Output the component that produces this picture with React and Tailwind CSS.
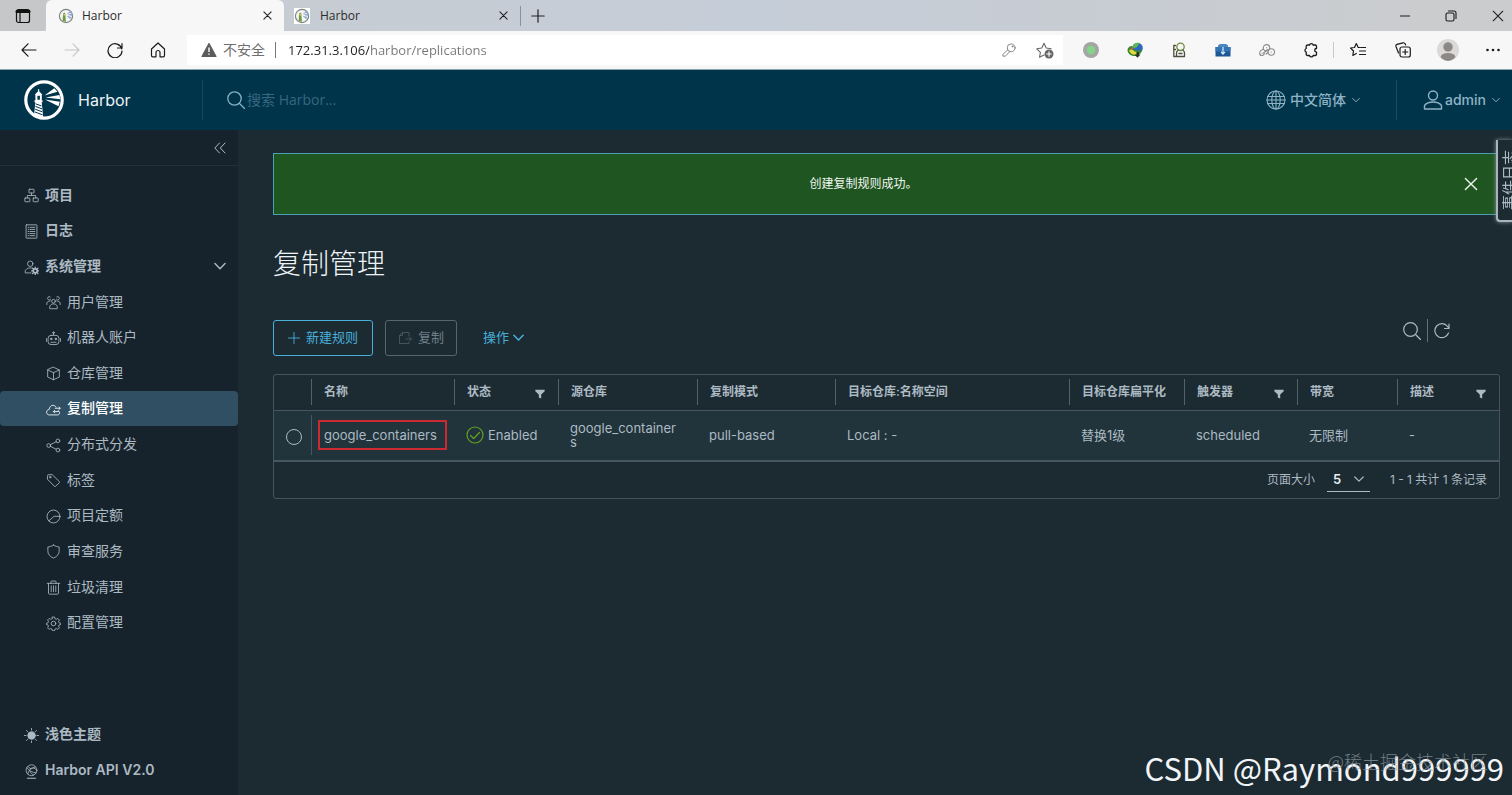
import React from "react";

const UI = "font-['Inter','Noto_Sans_CJK_SC',sans-serif]";
const SYS = "font-['Open_Sans','Noto_Sans_CJK_SC',sans-serif]";

function Ico({ className = "size-4", w = 2, box = 36, children }) {
  return (
    <svg
      aria-hidden="true"
      viewBox={`0 0 ${box} ${box}`}
      className={`shrink-0 ${className}`}
      fill="none"
      stroke="currentColor"
      strokeWidth={w}
      strokeLinecap="round"
      strokeLinejoin="round"
    >
      {children}
    </svg>
  );
}

const CloseX = ({ className = "size-2.5", w = 1.2 }) => (
  <Ico box={10} w={w} className={className}>
    <path d="M1 1l8 8M9 1l-8 8" />
  </Ico>
);

const Chevron = ({ className = "size-2", w = 1.2 }) => (
  <Ico box={10} w={w} className={className}>
    <path d="M.8 3l4.200 4.200L9.200 3" />
  </Ico>
);

const Funnel = () => (
  <svg aria-hidden="true" viewBox="0 0 10 10" className="size-2.5 shrink-0" fill="currentColor">
    <path d="M.3.8h9.400v1.400L6.200 5.600v4L3.800 8.400V5.600L.3 2.200z" />
  </svg>
);

const Favicon = () => (
  <svg aria-hidden="true" viewBox="0 0 16 16" className="size-4 shrink-0">
    <circle cx="8" cy="8" r="6.600" fill="#f4f5f4" stroke="#7d8583" strokeWidth="1.200" />
    <path d="M8.500 6l4.500-3.500 1.300 2zM9 6.800l5.500-1.300v2.500zM8.500 7.800l5 1.200-1.500 2z" fill="#8fa6d4" />
    <path d="M5 5.800L6.200 4.500l1.200 1.300v2l.5 6-3.200-.8z" fill="#6c9a3f" />
    <path d="M5.500 6h1.400v1.500H5.500z" fill="#e9d36a" />
  </svg>
);

const Logo = () => (
  <svg aria-hidden="true" viewBox="0 0 40 40" className="size-10 shrink-0">
    <circle cx="20" cy="20" r="18.200" fill="none" stroke="#fff" strokeWidth="3.200" />
    <path d="M10 36.500l1.300-14.500h6.400l1.600 16.300c-3.500 0-6.500-.3-9.300-1.800z" fill="#fff" />
    <path d="M10.500 20.300h8v1.900h-8zM11.400 14.500h6.400v6h-6.400zM10.700 14.800l3.900-4 3.900 4z" fill="#fff" />
    <path d="M14 9.300h1.200v2.200H14z" fill="#fff" />
    <path d="M13.400 15.800h2.500v3.900h-2.500z" fill="#00344b" />
    <path d="M11.600 23.800l6 2.200M11.400 26.400l6.600 2.500M11.200 29.200l7 2.600M11 32l7.500 2.800" stroke="#00344b" strokeWidth="1" />
    <path d="M20.500 15.600L30.300 8.200l3.200 3.600zM21.500 17.400l14-2.400.8 4.300zM21 19.500l14.800 2.300-1.300 4.400z" fill="#fff" />
  </svg>
);

const icons = {
  project: (
    <>
      <rect x="12" y="3" width="12" height="9" rx="1" />
      <rect x="2" y="24" width="12" height="9" rx="1" />
      <rect x="22" y="24" width="12" height="9" rx="1" />
      <path d="M18 12v6M8 24v-6h20v6" />
    </>
  ),
  log: (
    <>
      <rect x="5" y="2" width="26" height="32" rx="1" />
      <path d="M10 8h2M15 8h11M10 13h2M15 13h11M10 18h2M15 18h11M10 23h2M15 23h11M10 28h2M15 28h11" />
    </>
  ),
  admin: (
    <>
      <circle cx="15" cy="9" r="6.500" />
      <path d="M17 31H3v-6c3-4 7-6 12-6 1.500 0 3 .2 4.500.6" />
      <circle cx="27" cy="26" r="4.800" strokeWidth="4" />
      <path d="M27 17v3M27 32v3M18 26h3M33 26h3M20.600 19.600l2.200 2.200M31.200 30.200l2.200 2.200M33.400 19.600l-2.200 2.200M22.800 30.200l-2.200 2.200" strokeWidth="3" />
    </>
  ),
  users: (
    <>
      <circle cx="18" cy="15" r="4.500" />
      <path d="M9 32v-5c2-4 5-5.500 9-5.500s7 1.500 9 5.500v5z" />
      <path d="M11 10.500a4 4 0 1 1-1-6M25 10.500a4 4 0 1 0 1-6M2 23v-4c1.500-3 4-4.500 8-4.500M34 23v-4c-1.500-3-4-4.500-8-4.500" />
    </>
  ),
  robot: (
    <>
      <path d="M18 10V4" />
      <circle cx="18" cy="4" r="2" />
      <rect x="5" y="10.500" width="26" height="22" rx="7" />
      <circle cx="12.500" cy="19" r="1.800" fill="currentColor" />
      <circle cx="23.500" cy="19" r="1.800" fill="currentColor" />
      <path d="M12 27h12M1 18v7M35 18v7" />
    </>
  ),
  cube: (
    <>
      <path d="M18 3l14 6.500v17L18 33 4 26.500v-17z" />
      <path d="M4 9.500L18 16l14-6.500M18 16v17" />
    </>
  ),
  cloud: (
    <>
      <path d="M29 21c2.500.5 3.500 2.500 3.500 5 0 3.500-2 5-5 5H8c-4 0-6.500-2.500-6.500-6.500 0-3.800 2.600-6.300 6-6.500C8.500 12 12 8 16.500 8c3.500 0 6 1.600 7.600 4.200" />
      <path d="M18 23h12M21 20l-3 3 3 3M22 15h12M31 12l3 3-3 3" />
    </>
  ),
  share: (
    <>
      <circle cx="6.500" cy="18" r="4.500" />
      <circle cx="28.500" cy="7" r="4.500" />
      <circle cx="28.500" cy="29" r="4.500" />
      <path d="M10.500 16l14-7M10.500 20l14 7" />
    </>
  ),
  tag: (
    <>
      <path d="M4 5.500C4 4.500 4.500 4 5.500 4H15l17 16.500c1 1 1 1.800 0 2.800L23 32c-1 1-1.800 1-2.800 0L4 15.500z" />
      <circle cx="10" cy="10" r="1.800" />
    </>
  ),
  quota: (
    <>
      <circle cx="18" cy="18" r="15.500" />
      <path d="M7 28.500L19.500 17.500H33" />
    </>
  ),
  shield: <path d="M18 2.500c4.500 3 9 4.400 13.500 4.500v10.500c0 7-5 12.500-13.500 16.500C9.500 30 4.500 24.500 4.500 17.500V7C9 6.900 13.500 5.500 18 2.500z" />,
  trash: (
    <>
      <path d="M3 8h30M6 8v24c0 1 1 2 2 2h20c1 0 2-1 2-2V8M12 8V4c0-1 .5-1.500 1.500-1.500h9c1 0 1.500.5 1.500 1.500v4" />
      <path d="M12.500 14v14M18 14v14M23.500 14v14" />
    </>
  ),
  gear: (
    <>
      <circle cx="18" cy="18" r="5.500" />
      <path d="M15.500 2.500h5l1.200 4.200 3 1.200 3.800-2 3.600 3.600-2 3.800 1.200 3 4.200 1.200v3l-4.200 1.200-1.200 3 2 3.800-3.600 3.600-3.800-2-3 1.200-1.200 4.200h-5l-1.200-4.200-3-1.200-3.800 2-3.600-3.600 2-3.800-1.200-3L.8 20.500v-3L4.700 16.300l1.200-3-2-3.800 3.600-3.600 3.800 2 3-1.200z" />
    </>
  ),
  sun: (
    <>
      <circle cx="18" cy="18" r="9" fill="currentColor" />
      <path d="M18 1v4M18 31v4M1 18h4M31 18h4M6 6l3 3M27 27l3 3M30 6l-3 3M9 27l-3 3" />
    </>
  ),
  api: (
    <>
      <circle cx="18" cy="15" r="13" />
      <path d="M7 9c6 8 14 12 22 12M9 24c1-8 8-14 18-17M10 6l5 5M15 11c6-3 10-1 14 2M14 17c2 5 5 8 9 9" />
      <path d="M8 34h20" strokeWidth="2.500" />
    </>
  ),
};

const subItems = [
  ["用户管理", "users"],
  ["机器人账户", "robot"],
  ["仓库管理", "cube"],
  ["复制管理", "cloud"],
  ["分布式分发", "share"],
  ["标签", "tag"],
  ["项目定额", "quota"],
  ["审查服务", "shield"],
  ["垃圾清理", "trash"],
  ["配置管理", "gear"],
];

function TopItem({ label, icon }) {
  return (
    <a href="#" className="flex items-center gap-1.5 pl-6 text-sm font-semibold">
      <Ico className="size-[15px] mt-0.5">{icons[icon]}</Ico>
      {label}
    </a>
  );
}

function Sidebar() {
  return (
    <aside className="flex w-[238px] shrink-0 flex-col bg-[#17232c] text-[#acbac3]">
      <div className="flex h-9 items-center justify-end border-b border-[#22323b] pr-3">
        <button type="button" aria-label="折叠菜单">
          <Ico box={12} w={1} className="size-3">
            <path d="M5.500 1L.8 6l4.700 5M11 1L6.300 6l4.700 5" />
          </Ico>
        </button>
      </div>
      <nav className="mt-[11px] grid h-[463px] shrink-0 auto-rows-fr">
        <TopItem label="项目" icon="project" />
        <TopItem label="日志" icon="log" />
        <button type="button" className="flex items-center gap-1.5 pl-6 pr-3 text-left text-sm font-semibold">
          <Ico className="size-[15px] mt-0.5">{icons.admin}</Ico>
          <span className="flex-1">系统管理</span>
          <Chevron className="size-3" />
        </button>
        {subItems.map(([label, icon]) => (
          <a
            key={label}
            href="#"
            className={`flex items-center gap-1.5 pl-[46px] text-sm ${
              icon === "cloud" ? "rounded bg-[#304f62] font-medium text-white" : ""
            }`}
          >
            <Ico className="size-[15px] mt-0.5">{icons[icon]}</Ico>
            {label}
          </a>
        ))}
      </nav>
      <div className="mt-auto grid auto-rows-[36px] pb-[7px]">
        <TopItem label="浅色主题" icon="sun" />
        <TopItem label="Harbor API V2.0" icon="api" />
      </div>
    </aside>
  );
}

function BrowserTab({ active }) {
  return (
    <div
      className={`flex h-full items-center ${
        active ? "w-[238px] rounded-t-md bg-[#f7f7f7] pl-3 pr-3" : "w-[236px] rounded-bl-md pl-2.5 pr-3"
      }`}
    >
      <span className={active ? "" : "bg-white"}>
        <Favicon />
      </span>
      <span className={`flex-1 text-xs text-[#2b2b2b] ${active ? "pl-2" : "pl-2.5"}`}>Harbor</span>
      <button type="button" aria-label="关闭标签页" className="text-[#222]">
        <CloseX className="size-[9px]" />
      </button>
    </div>
  );
}

function ToolBtn({ label, className = "w-11", children }) {
  return (
    <button type="button" aria-label={label} className={`flex items-center justify-center ${className}`}>
      {children}
    </button>
  );
}

function BrowserChrome() {
  return (
    <div className={`shrink-0 ${SYS}`}>
      <div className="flex h-[31px] items-center bg-linear-to-r from-[#c8ccd0] via-[#c5cdd8] to-[#cbcccd]">
        <button type="button" aria-label="标签页操作" className="flex h-full w-[46px] items-center justify-center rounded-br-md bg-[#c6c7c8] text-[#111]">
          <Ico box={16} w={1.200} className="size-4">
            <rect x="1.500" y="1.500" width="13" height="13" rx="2" />
            <path d="M2 3.500h12" strokeWidth="3" />
            <path d="M5 5v9.500" />
          </Ico>
        </button>
        <BrowserTab active />
        <BrowserTab />
        <span className="h-5 w-px bg-[#8c9197]" />
        <button type="button" aria-label="新建标签页" className="ml-2.5 text-[#222]">
          <Ico box={14} w={1.200} className="size-3.5">
            <path d="M7 .8v12.400M.8 7h12.400" />
          </Ico>
        </button>
        <div className="ml-auto flex items-center gap-[35px] pr-2 text-[#1b1b1b]">
          <button type="button" aria-label="最小化">
            <Ico box={10} w={1.100} className="size-2.5">
              <path d="M.3 5h9.400" />
            </Ico>
          </button>
          <button type="button" aria-label="还原">
            <Ico box={12} w={1.100} className="size-3">
              <rect x="1" y="3" width="8" height="8" rx="1.500" />
              <path d="M3.500 1h5.500a2 2 0 0 1 2 2v5.500" />
            </Ico>
          </button>
          <button type="button" aria-label="关闭">
            <CloseX w={0.900} className="size-3" />
          </button>
        </div>
      </div>
      <div className="flex h-[39px] items-center border-b border-[#8fa3ab] bg-[#f7f7f7] text-[#1b1b1b]">
        <div className="flex pl-[7px] pr-2">
          <ToolBtn label="后退" className="w-[43px]">
            <Ico box={16} w={1.200}>
              <path d="M15 8H1M7 1.800L1 8l6 6.200" />
            </Ico>
          </ToolBtn>
          <ToolBtn label="前进" className="w-[43px] text-[#c6c6c6]">
            <Ico box={16} w={1.100}>
              <path d="M1 8h14M9 1.800L15 8l-6 6.200" />
            </Ico>
          </ToolBtn>
          <ToolBtn label="刷新" className="w-[43px]">
            <Ico box={16} w={1.200}>
              <path d="M14.800 7A7 7 0 1 0 15 9M15 1.500V6h-4.500" />
            </Ico>
          </ToolBtn>
          <ToolBtn label="主页" className="w-[43px]">
            <Ico box={16} w={1.200}>
              <path d="M1.500 7L8 1l6.500 6v6.500c0 .8-.5 1.300-1.200 1.300H10V10.500a2 2 0 0 0-4 0v4.300H2.700c-.7 0-1.200-.5-1.200-1.300z" />
            </Ico>
          </ToolBtn>
        </div>
        <div className="flex h-[30px] flex-1 items-center bg-white pl-3.5">
          <svg aria-hidden="true" viewBox="0 0 16 16" className="size-4 shrink-0">
            <path d="M8 1.200L15.200 14.500H.8z" fill="#5c5c5c" stroke="#5c5c5c" strokeLinejoin="round" />
            <path d="M8 5.500v4.500M8 11.500v1.300" stroke="#fff" strokeWidth="1.400" />
          </svg>
          <span className="pl-1.5 text-sm text-[#6e6e6e]">不安全</span>
          <span className="ml-2.5 h-4 w-px bg-[#777]" />
          <input
            aria-label="地址"
            defaultValue="172.31.3.106/harbor/replications"
            className="ml-3 h-6 min-w-0 flex-1 bg-[linear-gradient(90deg,#1f1f1f_81px,#767676_81px)] bg-clip-text text-[13px] text-transparent outline-none"
          />
          <ToolBtn label="密码" className="w-9 text-[#777]">
            <Ico box={16} w={1} className="size-3.5">
              <circle cx="10.500" cy="5.500" r="4.500" />
              <circle cx="12" cy="4" r=".6" />
              <path d="M6.500 7.800L1 13v2h3l4.800-5.200" />
            </Ico>
          </ToolBtn>
          <ToolBtn label="收藏此页" className="w-9 text-[#666]">
            <Ico box={18} w={1.100} className="size-[18px]">
              <path d="M8 14l-4.500 2.300.9-5L.8 7.800l5-.8L8 2.300 10.200 7l5 .8" />
              <circle cx="13" cy="13" r="4.500" fill="#666" stroke="none" />
              <path d="M13 10.800v4.400M10.800 13h4.400" stroke="#fff" />
            </Ico>
          </ToolBtn>
        </div>
        <div className="flex items-center pl-1.5">
          <ToolBtn label="扩展 1">
            <svg viewBox="0 0 16 16" className="size-4">
              <circle cx="8" cy="8" r="8" fill="#a3a6a3" />
              <circle cx="8" cy="8" r="4.200" fill="#84d48a" />
            </svg>
          </ToolBtn>
          <ToolBtn label="扩展 2">
            <svg viewBox="0 0 16 16" className="size-4">
              <circle cx="10.500" cy="6" r="5.300" fill="#2c68c0" />
              <path d="M6 3.500C7.500 1 10.500.3 12.500 1L10 5 6.500 6.500z" fill="#62b845" />
              <path d="M.5 8c0-2 2-4 4.500-4l1.500 3.500 5 1.500 3.500-1.500c0 3-3 6-6.500 6.500C4 14.500.5 11.500.5 8z" fill="#358a2f" />
              <path d="M2 8.500c1.500-1.500 3-1.500 4.500 0s3.500 2 6 1l-3 3c-3 .8-6-.5-7.500-4z" fill="#e8d640" />
              <path d="M2.500 6.500l3-1.500.5 2.500z" fill="#d8532c" />
              <path d="M7.500 12.500h2V10h2.500v2.500h1.500l-3 3.200z" fill="#26331f" />
            </svg>
          </ToolBtn>
          <ToolBtn label="扩展 3" className="w-11 text-[#4b4f3d]">
            <Ico box={16} w={1.300}>
              <circle cx="9.500" cy="4.800" r="3.700" stroke="#6c8a3a" />
              <path d="M4.500 3.500H2.800v4H4.500M2.800 7.500v7h10.700V11c0-1.500-.5-2.200-1.500-2.800M7 8.200c-1 .6-1.500 1.500-1.500 3v3M8 11.500h3" />
            </Ico>
          </ToolBtn>
          <ToolBtn label="扩展 4">
            <svg viewBox="0 0 16 16" className="size-4">
              <path d="M3 5.500V3.500L5 2h6l2 1.500v2z" fill="#4a86bf" />
              <path d="M.5 5h15v9.500H.5z" fill="#1f5796" />
              <path d="M.5 5h15v4.500H.5z" fill="#3474b4" />
              <path d="M8 5v6.500M6 9.800L8 12l2-2.200" stroke="#d7ecff" strokeWidth="1.200" fill="none" />
            </svg>
          </ToolBtn>
          <ToolBtn label="扩展 5" className="w-11 text-[#8a8a8a]">
            <Ico box={16} w={1.100}>
              <circle cx="7.500" cy="5.800" r="3.200" />
              <circle cx="12.300" cy="10" r="3.200" />
              <path d="M4.500 7C2 8 .7 9.500.7 11.200c0 1.300 1 2.300 2.300 2.300s2.200-1 2.200-2.200M4.500 11l4-3.500M7.500 5.800h.1M12.300 10h.1M3 11.200h.1M7 12l2-1.500" />
            </Ico>
          </ToolBtn>
          <ToolBtn label="扩展">
            <Ico box={16} w={1.300}>
              <path d="M4.500 3h2a1.900 1.900 0 0 1 3.700 0h2c.8 0 1.300.5 1.300 1.300v2.200a1.800 1.800 0 0 0 0 3.600v2.100c0 .8-.5 1.300-1.300 1.300h-2a1.900 1.900 0 0 1-3.700 0h-2c-.8 0-1.300-.5-1.300-1.300v-2.100a1.900 1.900 0 0 1 0-3.600V4.300c0-.8.5-1.300 1.300-1.300z" />
            </Ico>
          </ToolBtn>
          <span className="h-4 w-px bg-[#c9c9c9]" />
        </div>
        <div className="flex items-center gap-[7px] pl-[5px]">
          <ToolBtn label="收藏夹" className="w-[38px]">
            <Ico box={16} w={1.200}>
              <path d="M10 5.500H8.200L6.300 1.500 4.500 5.500l-4 .5 3 3-.7 4.500 3.500-2M11 5.500h4.500M9.500 9h6M9.500 12.500h6" />
            </Ico>
          </ToolBtn>
          <ToolBtn label="集锦" className="w-[38px]">
            <Ico box={16} w={1.200}>
              <rect x="5" y="5" width="10.300" height="10" rx="2" />
              <path d="M10.200 7.500v5M7.700 10h5M3.500 11L1 4.500c-.3-1 .1-1.800 1-2.200l6-1.500c1-.2 1.800.2 2.200 1.200l.4 1" />
            </Ico>
          </ToolBtn>
          <ToolBtn label="用户配置" className="w-[38px]">
            <svg viewBox="0 0 22 22" className="size-[22px]">
              <circle cx="11" cy="11" r="11" fill="#dad9d8" />
              <circle cx="11" cy="8" r="4.700" fill="#8b8886" />
              <path d="M3.500 18c1-3 3.500-4 7.500-4s6.500 1 7.500 4A11 11 0 0 1 11 22a11 11 0 0 1-7.500-4z" fill="#8b8886" />
            </svg>
          </ToolBtn>
          <ToolBtn label="更多" className="w-[38px]">
            <svg viewBox="0 0 16 16" className="size-4" fill="#1b1b1b">
              <circle cx="2.500" cy="8" r="1.300" />
              <circle cx="8" cy="8" r="1.300" />
              <circle cx="13.500" cy="8" r="1.300" />
            </svg>
          </ToolBtn>
        </div>
      </div>
    </div>
  );
}

function Header() {
  return (
    <header className="flex h-[60px] shrink-0 items-center bg-[#00344b] text-[#8fb3c4]">
      <a href="#" className="flex w-[202px] items-center gap-3.5 pl-6 text-base text-[#eef3f5]">
        <Logo />
        Harbor
      </a>
      <span className="h-10 w-px bg-[#154659]" />
      <label className="flex flex-1 items-center pl-6">
        <Ico box={18} w={1.300} className="size-[18px] text-[#88b2c6]">
          <circle cx="7.500" cy="7.500" r="6.700" />
          <path d="M12.500 12.500l5 5" />
        </Ico>
        <input
          type="search"
          aria-label="搜索"
          placeholder="搜索 Harbor..."
          className={`ml-0.5 w-60 bg-transparent text-sm outline-none placeholder:text-[#376780] ${SYS}`}
        />
      </label>
      <button type="button" className="flex items-center pr-9 text-sm font-medium">
        <Ico box={20} w={1.100} className="size-5">
          <circle cx="10" cy="10" r="9" />
          <ellipse cx="10" cy="10" rx="4.200" ry="9" />
          <path d="M10 1v18M1.800 6.500h16.400M1.800 13.500h16.400M1 10h18" />
        </Ico>
        <span className="pl-1 pr-1.5">中文简体</span>
        <Chevron />
      </button>
      <span className="h-10 w-px bg-[#1c4c60]" />
      <button type="button" className="flex items-center pl-[26px] pr-3 text-sm font-medium">
        <Ico box={20} w={1.400} className="size-5">
          <circle cx="10" cy="5.500" r="4.500" />
          <path d="M1.500 19v-3.500C3.500 13 6.500 12 10 12s6.500 1 8.500 3.500V19z" />
        </Ico>
        <span className="pl-0.5 pr-1.5">admin</span>
        <Chevron />
      </button>
    </header>
  );
}

const columns = [
  ["名称", "w-[143px]", false],
  ["状态", "w-[104px]", true],
  ["源仓库", "w-[139px]", false],
  ["复制模式", "w-[138px]", false],
  ["目标仓库:名称空间", "w-[234px]", false],
  ["目标仓库扁平化", "w-[115px]", false],
  ["触发器", "w-[113px]", true],
  ["带宽", "w-[100px]", false],
  ["描述", "", true],
];

function RulesTable() {
  return (
    <div className="mt-[18px] overflow-hidden rounded-[3px] border border-[#43545d] text-[#acbac3]">
      <table className="w-full table-fixed border-collapse text-left">
        <thead>
          <tr className="h-[35px]">
            <th className="w-[37px] p-0" aria-label="选择" />
            {columns.map(([name, width, filter]) => (
              <th key={name} scope="col" className={`p-0 ${width}`}>
                <div className="flex h-[26px] items-center justify-between border-l border-[#51626b] pl-3 pr-[13px] text-xs font-semibold whitespace-nowrap">
                  {name}
                  {filter && (
                    <button type="button" aria-label={`筛选${name}`} className="pt-1">
                      <Funnel />
                    </button>
                  )}
                </div>
              </th>
            ))}
          </tr>
        </thead>
        <tbody>
          <tr className="h-[51px] border-y border-b-2 border-[#46575f] bg-[#21333b] text-[13px]">
            <td className="p-0 pt-0.5 pl-0.5 text-center align-middle">
              <input
                type="radio"
                name="rule"
                aria-label="google_containers"
                className="size-4 appearance-none rounded-full border border-[#acbac3] align-middle"
              />
            </td>
            <td className="p-0">
              <div className="flex h-10 items-center border-l border-[#46575f] pl-1.5">
                <span className="flex h-[30px] items-center border-2 border-[#cc2a30] pl-1 pr-2">google_containers</span>
              </div>
            </td>
            <td className="p-0 pl-3">
              <div className="flex items-center gap-1">
                <Ico box={18} w={1.200} className="size-[18px] text-[#62a420]">
                  <circle cx="9" cy="9" r="8" />
                  <path d="M4.500 9.500l3.200 3 5.800-6" />
                </Ico>
                Enabled
              </div>
            </td>
            <td className="p-0 pl-3 pr-[18px] leading-[14px] break-all">google_containers</td>
            <td className="p-0 pl-3">pull-based</td>
            <td className="p-0 pl-3">Local : -</td>
            <td className="p-0 pl-3">替换1级</td>
            <td className="p-0 pl-3">scheduled</td>
            <td className="p-0 pl-3">无限制</td>
            <td className="p-0 pl-3">-</td>
          </tr>
        </tbody>
      </table>
      <div className="flex h-9 items-center justify-end pr-3 text-xs">
        <label htmlFor="page-size">页面大小</label>
        <div className="relative ml-3 mr-5">
          <select
            id="page-size"
            defaultValue="5"
            className="h-6 w-[43px] appearance-none border-b border-[#acbac3] bg-transparent pl-1.5 text-[13px] font-semibold text-[#e9eef1] outline-none"
          >
            <option>5</option>
            <option>10</option>
            <option>25</option>
          </select>
          <span className="pointer-events-none absolute top-1.5 right-1.5">
            <Chevron className="size-2.5" />
          </span>
        </div>
        <span>1 - 1 共计 1 条记录</span>
      </div>
    </div>
  );
}

function Main() {
  return (
    <main className="min-w-0 flex-1 pt-[23px] pr-3 pl-[35px]">
      <div role="alert" className="flex h-[62px] items-center border border-[#4a9fb3] bg-[#1f5520] text-xs text-[#f1f5f1]">
        <p className="flex-1 text-center">创建复制规则成功。</p>
        <button type="button" aria-label="关闭提示" className="flex w-[46px] justify-start pl-[11px]">
          <CloseX className="size-3.5" w={1} />
        </button>
      </div>
      <h1 className="mt-[29px] text-[28px] leading-10 font-light text-[#eef3f5]">复制管理</h1>
      <div className="mt-[35px] flex items-center text-[13px] text-[#49afd9]">
        <button type="button" className="flex h-9 items-center gap-1.5 rounded-[3px] border border-[#49afd9] px-3.5">
          <Ico box={12} w={0.900} className="size-3">
            <path d="M6 .5v11M.5 6h11" />
          </Ico>
          新建规则
        </button>
        <button type="button" disabled className="ml-3 flex h-9 items-center gap-1.5 rounded-[3px] border border-[#56666f] px-3 text-[#6f7f88]">
          <Ico box={14} w={1} className="size-3.5 text-[#43545d]">
            <path d="M11 5V1.500H4.500L1.500 4.500v8H11V11M1.500 4.500h3v-3M8 8h5.500M11.500 6l2 2-2 2" />
          </Ico>
          复制
        </button>
        <button type="button" className="ml-[26px] flex items-center gap-1">
          操作
          <Chevron className="size-[11px]" w={1.400} />
        </button>
        <div className="mr-[50px] mb-3.5 ml-auto flex items-center gap-1.5 text-[#acbac3]">
          <button type="button" aria-label="搜索">
            <Ico box={18} w={1.200} className="size-[18px]">
              <circle cx="7.500" cy="7.500" r="6.800" />
              <path d="M13 13l4.500 4.500" />
            </Ico>
          </button>
          <span className="h-[23px] w-px bg-[#5f7079]" />
          <button type="button" aria-label="刷新">
            <Ico box={16} w={1.200}>
              <path d="M14.500 10A7 7 0 1 1 13.500 3.500L15 5.500M15 1v4.500h-4.500" />
            </Ico>
          </button>
        </div>
      </div>
      <RulesTable />
    </main>
  );
}

export default function App() {
  return (
    <div className={`flex min-h-screen flex-col bg-[#1c2a32] ${UI}`}>
      <BrowserChrome />
      <Header />
      <div className="relative flex flex-1 overflow-hidden">
        <Sidebar />
        <Main />
        <button
          type="button"
          className="absolute top-2.5 right-0 flex h-[82px] w-4 items-center overflow-hidden rounded-bl-sm border-b-2 border-l-2 border-[#a9b4ba] bg-[#1c2a32] pl-1 text-[#acbac3] shadow-[0_0_4px_#8a979e]"
        >
          <span className="rotate-180 text-[15px] leading-4 whitespace-nowrap [text-orientation:sideways] [writing-mode:vertical-rl]">
            事件日志
          </span>
        </button>
        <div className="pointer-events-none absolute right-2 bottom-[7px] font-['Noto_Sans_CJK_SC',sans-serif] text-[31px] leading-10 text-[#f2f5f7]">
          CSDN @Raymond999999
        </div>
        <div className="pointer-events-none absolute right-6 bottom-5 font-['Noto_Sans_CJK_SC',sans-serif] text-lg leading-7 font-light text-[#8f9aa1]/75">
          @稀土掘金技术社区
        </div>
      </div>
    </div>
  );
}
